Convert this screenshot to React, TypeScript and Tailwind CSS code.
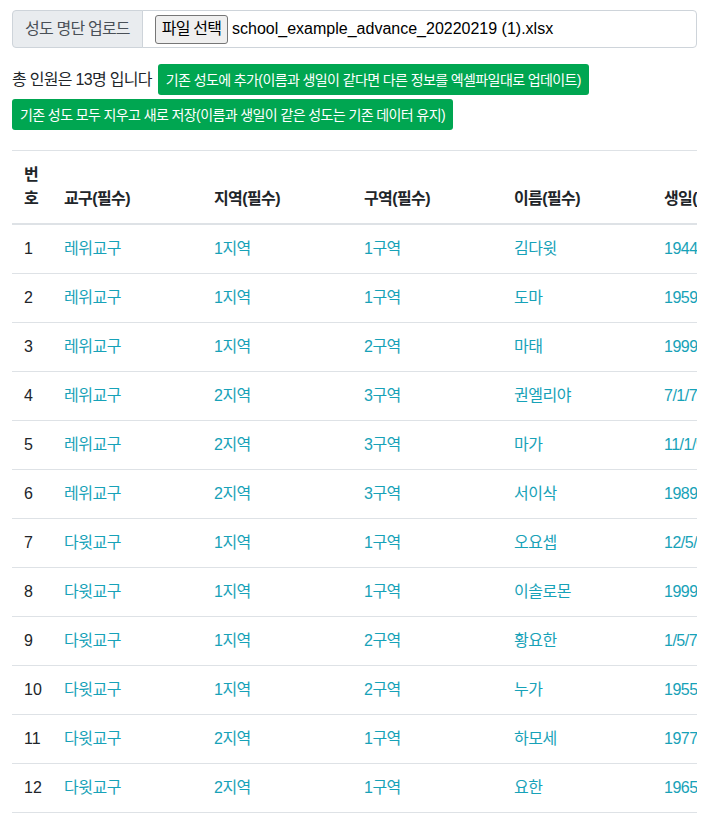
const members = [
  { no: 1, parish: "레위교구", region: "1지역", district: "1구역", name: "김다윗", birth: "1944-03-15", gender: "남", phone: "010-1234-5678" },
  { no: 2, parish: "레위교구", region: "1지역", district: "1구역", name: "도마", birth: "1959-07-02", gender: "남", phone: "010-2345-6789" },
  { no: 3, parish: "레위교구", region: "1지역", district: "2구역", name: "마태", birth: "1999-11-21", gender: "남", phone: "010-3456-7890" },
  { no: 4, parish: "레위교구", region: "2지역", district: "3구역", name: "권엘리야", birth: "7/1/78", gender: "남", phone: "010-4567-8901" },
  { no: 5, parish: "레위교구", region: "2지역", district: "3구역", name: "마가", birth: "11/1/95", gender: "남", phone: "010-5678-9012" },
  { no: 6, parish: "레위교구", region: "2지역", district: "3구역", name: "서이삭", birth: "1989-04-09", gender: "남", phone: "010-6789-0123" },
  { no: 7, parish: "다윗교구", region: "1지역", district: "1구역", name: "오요셉", birth: "12/5/80", gender: "남", phone: "010-7890-1234" },
  { no: 8, parish: "다윗교구", region: "1지역", district: "1구역", name: "이솔로몬", birth: "1999-01-30", gender: "남", phone: "010-8901-2345" },
  { no: 9, parish: "다윗교구", region: "1지역", district: "2구역", name: "황요한", birth: "1/5/79", gender: "남", phone: "010-9012-3456" },
  { no: 10, parish: "다윗교구", region: "1지역", district: "2구역", name: "누가", birth: "1955-06-18", gender: "남", phone: "010-0123-4567" },
  { no: 11, parish: "다윗교구", region: "2지역", district: "1구역", name: "하모세", birth: "1977-09-05", gender: "남", phone: "010-1357-2468" },
  { no: 12, parish: "다윗교구", region: "2지역", district: "1구역", name: "요한", birth: "1965-12-24", gender: "남", phone: "010-2468-1357" },
  { no: 13, parish: "다윗교구", region: "2지역", district: "2구역", name: "베드로", birth: "1970-02-11", gender: "남", phone: "010-9876-5432" },
];

const headers = ["교구(필수)", "지역(필수)", "구역(필수)", "이름(필수)", "생일(필수)", "성별", "전화번호"];

export default function App() {
  return (
    <div
      className="min-h-screen bg-white pl-3 pr-[10px] pt-[10px] text-base leading-6 text-[#212529]"
      style={{ fontFamily: '"Liberation Sans", "Noto Sans CJK KR", sans-serif' }}
    >
      <div className="flex h-[38px]">
        <span className="flex items-center rounded-l-[4px] border border-[#ced4da] bg-[#e9ecef] px-3 tracking-[-0.8px] text-[#495057]">
          성도 명단 업로드
        </span>
        <label className="-ml-px flex flex-1 items-center rounded-r-[4px] border border-[#ced4da] bg-white px-3">
          <span className="flex h-[29px] items-center rounded-[3px] border border-[#767676] bg-[#efefef] px-[6px] tracking-[-0.8px] text-black">
            파일 선택
          </span>
          <span className="ml-[4px] text-black">school_example_advance_20220219 (1).xlsx</span>
        </label>
      </div>

      <div className="mt-4 flex items-center gap-[6px]">
        <span className="tracking-[-0.7px]">총 인원은 13명 입니다</span>
        <button className="h-[31px] rounded-[3px] bg-[#00a651] px-2 text-sm tracking-[-0.6px] text-white">
          기존 성도에 추가(이름과 생일이 같다면 다른 정보를 엑셀파일대로 업데이트)
        </button>
      </div>
      <div className="mt-1">
        <button className="h-[31px] rounded-[3px] bg-[#00a651] px-2 text-sm tracking-[-0.6px] text-white">
          기존 성도 모두 지우고 새로 저장(이름과 생일이 같은 성도는 기존 데이터 유지)
        </button>
      </div>

      <div className="mt-5 overflow-hidden">
        <table className="w-[1090px] table-fixed border-collapse text-left">
          <colgroup>
            <col className="w-[40px]" />
            {headers.map((h) => (
              <col key={h} className="w-[150px]" />
            ))}
          </colgroup>
          <thead>
            <tr className="border-t border-b-2 border-t-[#dee2e6] border-b-[#dee2e6]">
              <th className="p-3 align-bottom font-bold">번호</th>
              {headers.map((h) => (
                <th key={h} className="whitespace-nowrap p-3 align-bottom font-bold tracking-[-0.6px]">
                  {h}
                </th>
              ))}
            </tr>
          </thead>
          <tbody>
            {members.map((m) => (
              <tr key={m.no} className="border-b border-[#dee2e6]">
                <td className="p-3">{m.no}</td>
                {[m.parish, m.region, m.district, m.name, m.birth, m.gender, m.phone].map((v, i) => (
                  <td key={i} className="whitespace-nowrap p-3 tracking-[-0.5px] text-[#17a2b8]">
                    {v}
                  </td>
                ))}
              </tr>
            ))}
          </tbody>
        </table>
      </div>
    </div>
  );
}
